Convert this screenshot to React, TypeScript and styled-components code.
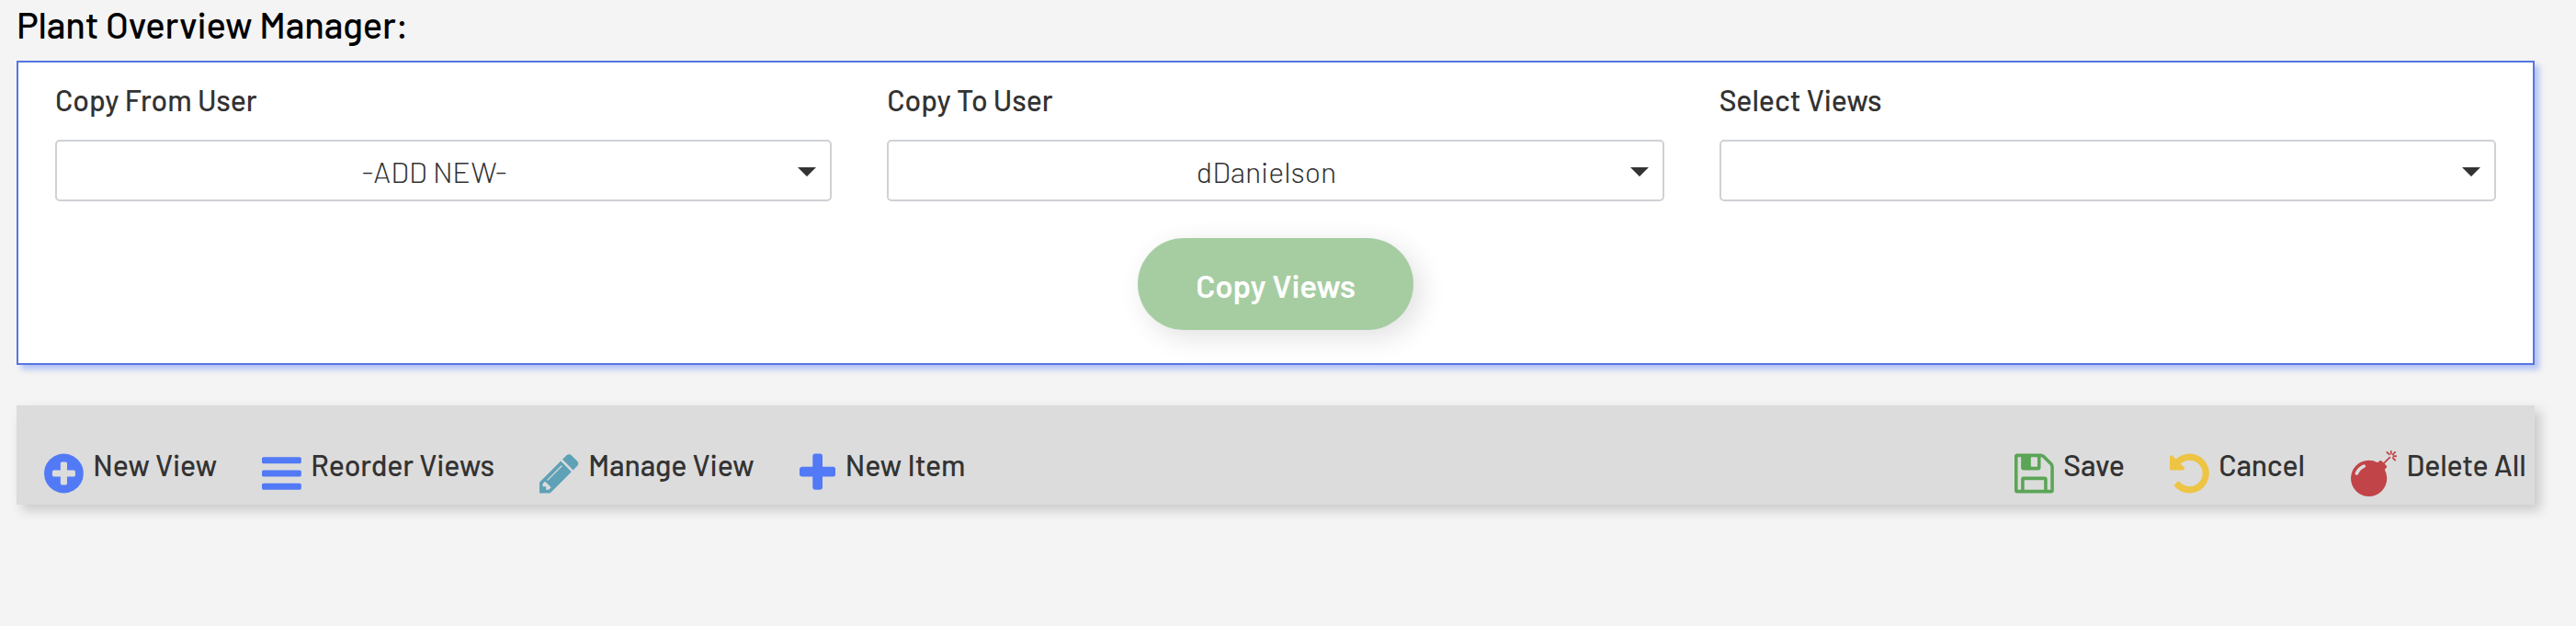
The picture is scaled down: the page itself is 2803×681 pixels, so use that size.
import React from "react";
import styled, { createGlobalStyle } from "styled-components";

const Global = createGlobalStyle`
  *, *::before, *::after { box-sizing: border-box; }
  body {
    margin: 0;
    background: #f4f4f4;
    color: #333;
    font-family: Barlow, Roboto, "Liberation Sans", sans-serif;
  }
`;

const Page = styled.main`
  width: 2803px;
  height: 681px;
  padding: 2px 45px 0 18px;
  background: #f4f4f4;
  overflow: hidden;
`;

const Title = styled.h1`
  margin: 0;
  height: 64px;
  font-size: 40px;
  font-weight: 500;
  line-height: 48px;
  letter-spacing: -0.2px;
  color: #000;
  white-space: nowrap;
`;

const Panel = styled.section`
  height: 331px;
  padding: 20px 40px 0;
  border: 2px solid #5676e0;
  background: #fff;
  box-shadow: 5px 5px 6px rgba(82, 122, 246, 0.4);
`;

const Fields = styled.div`
  display: grid;
  grid-template-columns: repeat(3, 1fr);
  column-gap: 60px;
`;

const Field = styled.div`
  display: flex;
  flex-direction: column;
`;

const FieldLabel = styled.label`
  height: 64px;
  font-size: 32px;
  font-weight: 500;
  line-height: 40px;
  letter-spacing: -0.1px;
  white-space: nowrap;
`;

const SelectBox = styled.div`
  display: flex;
  align-items: center;
  height: 67px;
  padding: 0 15px 0 0;
  border: 2px solid #cfd1d5;
  border-radius: 5px;
  background: #fff;
`;

const SelectValue = styled.span`
  flex: 1;
  padding-left: 15px;
  text-align: center;
  font-size: 32px;
  font-weight: 300;
  line-height: 40px;
  white-space: nowrap;
`;

const Caret = styled.span`
  margin-top: 3px;
  border: 10px solid transparent;
  border-top-color: #333;
  border-bottom: 0;
`;

const CopyButton = styled.button`
  display: block;
  width: 300px;
  height: 100px;
  margin: 40px auto 0;
  padding: 2px 0 0;
  border: 0;
  border-radius: 50px;
  background: #a6cda2;
  box-shadow: 8px 8px 30px rgba(0, 0, 0, 0.12);
  color: #fff;
  font-family: inherit;
  font-size: 35px;
  font-weight: 600;
  line-height: 44px;
  letter-spacing: -0.15px;
`;

const Toolbar = styled.nav`
  display: flex;
  justify-content: space-between;
  height: 108px;
  margin-top: 44px;
  padding: 46px 9px 0 30px;
  background: #dcdcdc;
  box-shadow: 6px 6px 12px rgba(0, 0, 0, 0.18);
`;

const Group = styled.div`
  display: flex;
  align-items: flex-start;
  gap: 46px;
`;

const Action = styled.a<{ $width: number }>`
  display: flex;
  align-items: flex-start;
  gap: 10.5px;
  width: ${(p) => p.$width}px;
`;

const Glyph = styled.svg<{ $color: string }>`
  flex: none;
  display: block;
  height: 50px;
  margin-top: 3px;
  fill: ${(p) => p.$color};
`;

const ActionText = styled.span`
  margin-top: -2px;
  font-size: 32px;
  font-weight: 500;
  line-height: 40px;
  letter-spacing: -0.15px;
  white-space: nowrap;
`;

type Icon = { x: number; w: number; d: string };

const icons: Record<string, Icon> = {
  plusCircle: {
    x: 128,
    w: 1536,
    d: "M1344 960v-128q0-26-19-45t-45-19h-256v-256q0-26-19-45t-45-19h-128q-26 0-45 19t-19 45v256h-256q-26 0-45 19t-19 45v128q0 26 19 45t45 19h256v256q0 26 19 45t45 19h128q26 0 45-19t19-45v-256h256q26 0 45-19t19-45zm320-64q0 209-103 385.5t-279.5 279.5-385.5 103-385.5-103-279.5-279.5-103-385.5 103-385.5 279.5-279.5 385.5-103 385.5 103 279.5 279.5 103 385.5z",
  },
  bars: {
    x: 128,
    w: 1536,
    d: "M1664 1344v128q0 26-19 45t-45 19h-1408q-26 0-45-19t-19-45v-128q0-26 19-45t45-19h1408q26 0 45 19t19 45zm0-512v128q0 26-19 45t-45 19h-1408q-26 0-45-19t-19-45v-128q0-26 19-45t45-19h1408q26 0 45 19t19 45zm0-512v128q0 26-19 45t-45 19h-1408q-26 0-45-19t-19-45v-128q0-26 19-45t45-19h1408q26 0 45 19t19 45z",
  },
  pencil: {
    x: 128,
    w: 1536,
    d: "M491 1536l91-91-235-235-91 91v107h128v128h107zm523-928q0-22-22-22-10 0-17 7l-542 542q-7 7-7 17 0 22 22 22 10 0 17-7l542-542q7-7 7-17zm-54-192l416 416-832 832h-416v-416zm683 96q0 53-37 90l-166 166-416-416 166-165q36-38 90-38 53 0 91 38l235 234q37 39 37 91z",
  },
  plus: {
    x: 192,
    w: 1408,
    d: "M1600 736v192q0 40-28 68t-68 28h-416v416q0 40-28 68t-68 28h-192q-40 0-68-28t-28-68v-416h-416q-40 0-68-28t-28-68v-192q0-40 28-68t68-28h416v-416q0-40 28-68t68-28h192q40 0 68 28t28 68v416h416q40 0 68 28t28 68z",
  },
  floppy: {
    x: 128,
    w: 1536,
    d: "M512 1536h768v-384h-768v384zm896 0h128v-896q0-14-10-38.5t-20-34.5l-281-281q-10-10-34-20t-39-10v416q0 40-28 68t-68 28h-576q-40 0-68-28t-28-68v-416h-128v1280h128v-416q0-40 28-68t68-28h832q40 0 68 28t28 68v416zm-384-928v-320q0-13-9.5-22.5t-22.5-9.5h-192q-13 0-22.5 9.5t-9.5 22.5v320q0 13 9.5 22.5t22.5 9.5h192q13 0 22.5-9.5t9.5-22.5zm640 32v928q0 40-28 68t-68 28h-1344q-40 0-68-28t-28-68v-1344q0-40 28-68t68-28h928q40 0 88 20t76 48l280 280q28 28 48 76t20 88z",
  },
  undo: {
    x: 128,
    w: 1536,
    d: "M1664 896q0 156-61 298t-164 245-245 164-298 61q-172 0-327-72.5t-264-204.5q-7-10-6.5-22.5t8.5-20.5l137-138q10-9 25-9 16 2 23 12 73 95 179 147t225 52q104 0 198.5-40.5t163.5-109.5 109.5-163.5 40.5-198.5-40.5-198.5-109.5-163.5-163.5-109.5-198.5-40.5q-98 0-188 35.5t-160 101.5l137 138q31 30 14 69-17 40-59 40h-448q-26 0-45-19t-19-45v-448q0-42 40-59 39-17 69 14l130 129q107-101 244.5-156.5t284.5-55.5q156 0 298 61t245 164 164 245 61 298z",
  },
  bomb: {
    x: 0,
    w: 1792,
    d: "M571 589q-10-25-34-35t-49 0q-108 44-191 127t-127 191q-10 25 0 49t35 34q13 5 24 5 42 0 60-40 34-84 98.5-148.5t148.5-98.5q25-11 35-35t0-49zm942-356l46 46-244 243 68 68q19 19 19 45.5t-19 45.5l-64 64q89 161 89 343 0 143-55.5 273.5t-150 225-225 150-273.5 55.5-273.5-55.5-225-150-150-225-55.5-273.5 55.5-273.5 150-225 225-150 273.5-55.5q182 0 343 89l64-64q19-19 45.5-19t45.5 19l68 68zm8-56q-10 10-22 10-13 0-23-10l-91-90q-9-10-9-23t9-23q10-9 23-9t23 9l90 91q10 9 10 22.5t-10 22.5zm230 230q-11 9-23 9t-23-9l-90-91q-10-9-10-22.5t10-22.5q9-10 22.5-10t22.5 10l91 90q9 10 9 23t-9 23zm41-183q0 14-9 23t-23 9h-96q-14 0-23-9t-9-23 9-23 23-9h96q14 0 23 9t9 23zm-192-192v96q0 14-9 23t-23 9-23-9-9-23v-96q0-14 9-23t23-9 23 9 9 23zm151 55l-91 90q-10 10-22 10-13 0-23-10-10-9-10-22.5t10-22.5l90-91q10-9 23-9t23 9q9 10 9 23t-9 23z",
  },
};

type Item = { icon: string; color: string; text: string; width: number };

const leftItems: Item[] = [
  { icon: "plusCircle", color: "#527af6", text: "New View", width: 191 },
  { icon: "bars", color: "#527af6", text: "Reorder Views", width: 256 },
  { icon: "pencil", color: "#5fa1b6", text: "Manage View", width: 237 },
  { icon: "plus", color: "#527af6", text: "New Item", width: 182 },
];

const rightItems: Item[] = [
  { icon: "floppy", color: "#5ba556", text: "Save", width: 123 },
  { icon: "undo", color: "#edc443", text: "Cancel", width: 151 },
  { icon: "bomb", color: "#c14448", text: "Delete All", width: 191 },
];

const fields = [
  { label: "Copy From User", value: "-ADD NEW-" },
  { label: "Copy To User", value: "dDanielson" },
  { label: "Select Views", value: "" },
];

function ToolbarAction({ item }: { item: Item }) {
  const { x, w, d } = icons[item.icon];
  return (
    <Action $width={item.width}>
      <Glyph $color={item.color} viewBox={`${x} 0 ${w} 1792`} width={(w / 1792) * 50} height={50}>
        <path d={d} />
      </Glyph>
      <ActionText>{item.text}</ActionText>
    </Action>
  );
}

export default function App() {
  return (
    <>
      <Global />
      <Page>
        <Title>Plant Overview Manager:</Title>
        <Panel>
          <Fields>
            {fields.map((f) => (
              <Field key={f.label}>
                <FieldLabel>{f.label}</FieldLabel>
                <SelectBox>
                  <SelectValue>{f.value}</SelectValue>
                  <Caret />
                </SelectBox>
              </Field>
            ))}
          </Fields>
          <CopyButton>Copy Views</CopyButton>
        </Panel>
        <Toolbar>
          <Group>
            {leftItems.map((i) => (
              <ToolbarAction key={i.text} item={i} />
            ))}
          </Group>
          <Group>
            {rightItems.map((i) => (
              <ToolbarAction key={i.text} item={i} />
            ))}
          </Group>
        </Toolbar>
      </Page>
    </>
  );
}
